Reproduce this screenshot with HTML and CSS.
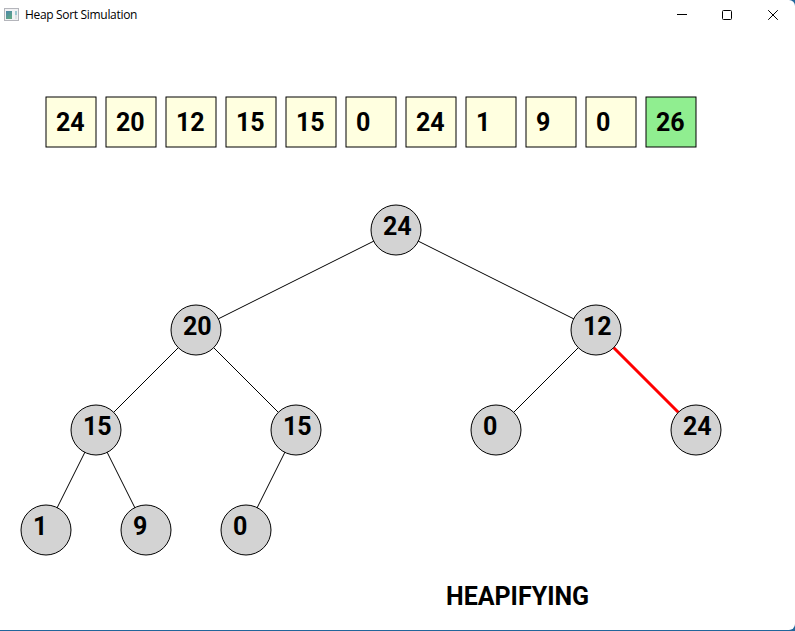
FILE: index.html
```html
<!DOCTYPE html>
<html lang="en">
<head>
<meta charset="utf-8">
<title>Heap Sort Simulation</title>
<link rel="stylesheet" href="styles.css">
</head>
<body>
<div class="window">
  <header class="titlebar">
    <svg class="app-icon" width="15" height="13" viewBox="0 0 15 13">
      <defs><linearGradient id="pane" x1="0" y1="0" x2="0.6" y2="1"><stop offset="0" stop-color="#4c86aa"/><stop offset="1" stop-color="#5fa685"/></linearGradient></defs>
      <rect x="0.5" y="0.5" width="14" height="12" fill="#f2f2f4" stroke="#b4b5bb"/>
      <rect x="2" y="3" width="6" height="8" fill="url(#pane)"/>
      <rect x="11" y="3" width="2" height="4" fill="#9cc8d0"/>
      <rect x="11" y="7" width="2" height="4" fill="#dfe3e4"/>
    </svg>
    <h1 class="title">Heap Sort Simulation</h1>
    <div class="controls">
      <svg width="10" height="10" viewBox="0 0 10 10"><path d="M0 4.5H10" stroke="#000"/></svg>
      <svg width="10" height="10" viewBox="0 0 10 10"><rect x="0.5" y="0.5" width="9" height="9" rx="1" fill="none" stroke="#000"/></svg>
      <svg width="10" height="10" viewBox="0 0 10 10"><path d="M0.2 0.2L9.8 9.8M9.8 0.2L0.2 9.8" stroke="#000"/></svg>
    </div>
  </header>
  <main>
    <div class="array">
      <div class="cell"><svg class="box"><rect x="1" y="1" width="50" height="50"/></svg><span>24</span></div>
      <div class="cell"><svg class="box"><rect x="1" y="1" width="50" height="50"/></svg><span>20</span></div>
      <div class="cell"><svg class="box"><rect x="1" y="1" width="50" height="50"/></svg><span>12</span></div>
      <div class="cell"><svg class="box"><rect x="1" y="1" width="50" height="50"/></svg><span>15</span></div>
      <div class="cell"><svg class="box"><rect x="1" y="1" width="50" height="50"/></svg><span>15</span></div>
      <div class="cell"><svg class="box"><rect x="1" y="1" width="50" height="50"/></svg><span>0</span></div>
      <div class="cell"><svg class="box"><rect x="1" y="1" width="50" height="50"/></svg><span>24</span></div>
      <div class="cell"><svg class="box"><rect x="1" y="1" width="50" height="50"/></svg><span>1</span></div>
      <div class="cell"><svg class="box"><rect x="1" y="1" width="50" height="50"/></svg><span>9</span></div>
      <div class="cell"><svg class="box"><rect x="1" y="1" width="50" height="50"/></svg><span>0</span></div>
      <div class="cell sorted"><svg class="box"><rect x="1" y="1" width="50" height="50"/></svg><span>26</span></div>
    </div>
    <svg class="tree" width="795" height="372" viewBox="0 198 795 372">
      <g class="edges">
        <path d="M396 230L196 330M396 230L596 330M196 330L96 430M196 330L296 430M596 330L496 430M96 430L46 530M96 430L146 530M296 430L246 530"/>
        <path class="active" d="M596 330L696 430"/>
      </g>
      <g class="nodes">
        <circle cx="396" cy="230" r="25"/><circle cx="196" cy="330" r="25"/><circle cx="596" cy="330" r="25"/>
        <circle cx="96" cy="430" r="25"/><circle cx="296" cy="430" r="25"/><circle cx="496" cy="430" r="25"/><circle cx="696" cy="430" r="25"/>
        <circle cx="46" cy="530" r="25"/><circle cx="146" cy="530" r="25"/><circle cx="246" cy="530" r="25"/>
      </g>
      <g class="labels">
        <text x="383" y="235.25">24</text><text x="183" y="335.25">20</text><text x="583" y="335.25">12</text>
        <text x="83" y="435.25">15</text><text x="283" y="435.25">15</text><text x="483" y="435.25">0</text><text x="683" y="435.25">24</text>
        <text x="33" y="535.25">1</text><text x="133" y="535.25">9</text><text x="233" y="535.25">0</text>
      </g>
    </svg>
  </main>
  <p class="status">HEAPIFYING</p>
</div>
</body>
</html>
```
FILE: styles.css
```css
* { box-sizing: border-box; }
body { margin: 0; background: #21669b; overflow: hidden; }
.window {
  width: 795px;
  height: 630px;
  background: #fff;
  border-radius: 0 6px 6px 0;
  font-family: Roboto, sans-serif;
}
.titlebar {
  display: flex;
  align-items: center;
  height: 29px;
  padding: 0 17px 0 4px;
}
.title {
  margin: 1px 0 0 6px;
  font: 400 12px/16px "Open Sans", "Noto Sans", sans-serif;
  letter-spacing: -0.32px;
  color: #000;
}
.controls { display: flex; gap: 36px; margin-left: auto; }
.controls svg { display: block; }
.controls svg:first-child { margin-right: -1px; }
.array { display: flex; gap: 8px; padding: 67px 0 0 45px; }
.cell {
  position: relative;
  width: 52px;
  height: 52px;
  padding: 2px 0 0 11px;
  font-size: 25px;
  font-weight: 700;
  line-height: 49px;
}
.cell span { position: relative; }
.box { position: absolute; inset: 0; width: 52px; height: 52px; }
.box rect { fill: #ffffe0; stroke: #000; stroke-width: 1; }
.sorted .box rect { fill: #90ee90; }
.tree { display: block; margin-top: 50px; }
.edges path { fill: none; stroke: #000; stroke-width: 1; }
.edges .active { stroke: #f00; stroke-width: 3; }
.nodes circle { fill: #d3d3d3; stroke: #000; stroke-width: 1; }
.labels text { font-size: 25px; font-weight: 700; }
.status {
  margin: 13px 0 0 446px;
  font-size: 25px;
  font-weight: 700;
  line-height: 28px;
}
```
